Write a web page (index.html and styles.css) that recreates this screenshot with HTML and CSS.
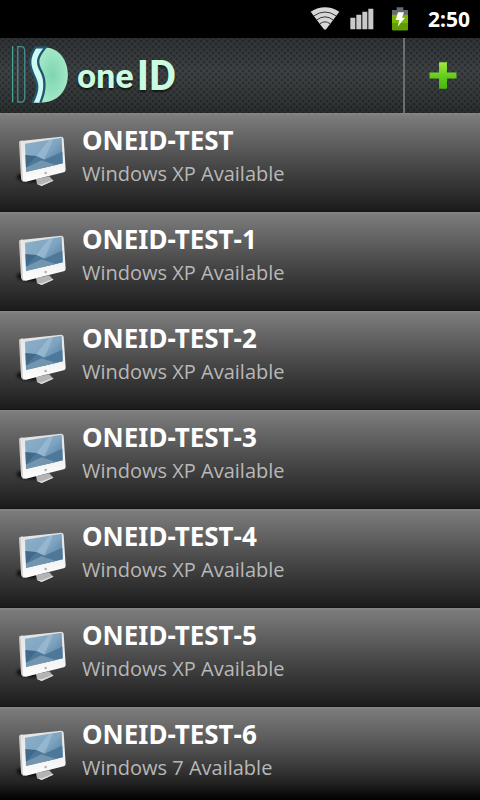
FILE: index.html
```html
<!DOCTYPE html>
<html lang="en">
<head>
<meta charset="utf-8">
<meta name="viewport" content="width=device-width, initial-scale=1">
<title>oneID</title>
<link rel="stylesheet" href="styles.css">
</head>
<body>
<svg class="defs" aria-hidden="true">
  <defs>
    <linearGradient id="screen" x1="0" y1="0" x2="1" y2="1">
      <stop offset="0" stop-color="#8fb0c8"/><stop offset="0.5" stop-color="#7fa5c2"/><stop offset="1" stop-color="#3f6a90"/>
    </linearGradient>
    <linearGradient id="case" x1="0" y1="0" x2="0" y2="1">
      <stop offset="0" stop-color="#e2e2e2"/><stop offset="1" stop-color="#fdfdfd"/>
    </linearGradient>
    <filter id="soft" x="-30%" y="-60%" width="160%" height="220%"><feGaussianBlur stdDeviation="5"/></filter>
    <symbol id="monitor" viewBox="42 72 168 162">
      <ellipse cx="94" cy="202" rx="44" ry="15" fill="#000" opacity="0.75" filter="url(#soft)"/>
      <path d="M108 207l40-8 12 13-35 16-14-6z" fill="#b4b4b4"/>
      <path d="M111 222l14 6 35-16-1-3-34 14z" fill="#ddd"/>
      <path d="M57 97q0-4 5-5l6-1 4 125-5-3q-3-2-4-8z" fill="#cfccca"/>
      <path d="M62 93l121-13q7 0 8 6l6 93q0 7-6 8l-113 28q-8 2-9-6L62 95z" fill="url(#case)"/>
      <path d="M75 101l110-18 3 77-110 26z" fill="url(#screen)"/>
      <path d="M76 135l33 3 24 11-55 24z" fill="#41698a"/>
      <path d="M109 138l24 11 54-24 1 35-62 14-48-1z" fill="#4d7899"/>
      <path d="M78 173l46-22 44 14-90 21z" fill="#7395ae"/>
      <path d="M109 138l38-49 13-2-27 62z" fill="#b4cfe0" opacity="0.4"/>
      <circle cx="137" cy="189" r="4" fill="#b8b3b3"/>
    </symbol>
  </defs>
</svg>

<div class="status">
  <svg class="wifi" viewBox="0 0 90 72" role="img" aria-label="Wi-Fi">
    <path d="M2 14Q45-12 88 14L49 66q-4 5-8 0z" fill="#d6d6d6"/>
    <path d="M11 27Q45 3 79 27M20 39Q45 20 70 39M30 50Q45 39 60 50" fill="none" stroke="#333" stroke-width="3"/>
  </svg>
  <svg class="signal" viewBox="0 0 72 66" role="img" aria-label="Signal strength">
    <path d="M1 29h15v35H1zM19 20h15v44H19zM37 11h15v53H37zM55 2h15v62H55z" fill="#c9c9c9"/>
  </svg>
  <svg class="battery" viewBox="0 0 54 72" role="img" aria-label="Battery charging">
    <path d="M17 1h20v8h14v17H3V9h14z" fill="#666b70"/>
    <path d="M3 23h48v44q0 3-3 3H6q-3 0-3-3z" fill="#78b800"/>
    <path d="M3 48h48v19q0 3-3 3H6q-3 0-3-3z" fill="#5f9d00"/>
    <path d="M21 16h18l-6 16h9L20 59l5-20H14z" fill="#fff"/>
  </svg>
  <time class="clock">2:50</time>
</div>

<header class="bar">
  <svg class="mark" viewBox="30 24 180 184" aria-hidden="true">
    <defs>
      <radialGradient id="disc"><stop offset="0" stop-color="#7ed5ae"/><stop offset="1" stop-color="#a3e8c8"/></radialGradient>
    </defs>
    <path d="M38 31v169" stroke="#4aa99c" stroke-width="5"/>
    <path d="M40 31v169" stroke="#163f4a" stroke-width="2"/>
    <path d="M53 32h10q11 0 11 15v135q0 17-11 17H53z" fill="none" stroke="#438f91" stroke-width="4"/>
    <path d="M131 35C175 33 204 72 204 116C204 164 174 202 118 201C140 160 133 130 118 104C105 78 112 60 131 35z" fill="url(#disc)"/>
    <path d="M106 34h29C108 66 108 80 120 103C134 128 137 160 119 201H97C119 160 113 141 100 115C86 84 87 64 106 34z" fill="#cdf9f3"/>
    <path d="M97 201C119 160 113 141 100 115C86 84 87 64 106 34h31C110 66 110 80 122 103C136 128 139 160 121 201" fill="none" stroke="#23566d" stroke-width="7"/>
  </svg>
  <h1 class="brand"><span class="one">one</span><span class="id">ID</span></h1>
  <button class="add" type="button" aria-label="Add">
    <svg viewBox="0 0 84 82" aria-hidden="true">
      <defs><linearGradient id="plus" x1="0" y1="0" x2="0" y2="1"><stop offset="0" stop-color="#a3e83f"/><stop offset="0.55" stop-color="#62cc1b"/><stop offset="1" stop-color="#48b90d"/></linearGradient></defs>
      <path d="M30 1h24v31h29v18H54v31H30V50H1V32h29z" fill="url(#plus)"/>
    </svg>
  </button>
</header>

<main>
  <ul class="list">
    <li><a class="row" href="#"><svg class="pc" aria-hidden="true"><use href="#monitor"/></svg><span class="text"><span class="name">ONEID-TEST</span><span class="info">Windows XP Available</span></span></a></li>
    <li><a class="row" href="#"><svg class="pc" aria-hidden="true"><use href="#monitor"/></svg><span class="text"><span class="name">ONEID-TEST<span class="num">-1</span></span><span class="info">Windows XP Available</span></span></a></li>
    <li><a class="row" href="#"><svg class="pc" aria-hidden="true"><use href="#monitor"/></svg><span class="text"><span class="name">ONEID-TEST<span class="num">-2</span></span><span class="info">Windows XP Available</span></span></a></li>
    <li><a class="row" href="#"><svg class="pc" aria-hidden="true"><use href="#monitor"/></svg><span class="text"><span class="name">ONEID-TEST<span class="num">-3</span></span><span class="info">Windows XP Available</span></span></a></li>
    <li><a class="row" href="#"><svg class="pc" aria-hidden="true"><use href="#monitor"/></svg><span class="text"><span class="name">ONEID-TEST<span class="num">-4</span></span><span class="info">Windows XP Available</span></span></a></li>
    <li><a class="row" href="#"><svg class="pc" aria-hidden="true"><use href="#monitor"/></svg><span class="text"><span class="name">ONEID-TEST<span class="num">-5</span></span><span class="info">Windows XP Available</span></span></a></li>
    <li><a class="row last" href="#"><svg class="pc" aria-hidden="true"><use href="#monitor"/></svg><span class="text"><span class="name">ONEID-TEST<span class="num">-6</span></span><span class="info">Windows 7 Available</span></span></a></li>
  </ul>
</main>
</body>
</html>
```
FILE: styles.css
```css
* { box-sizing: border-box; }
body {
  margin: 0;
  background: #000;
  color: #fff;
  font-family: "Noto Sans", "Open Sans", sans-serif;
}
.defs { position: absolute; width: 0; height: 0; }

.status {
  display: flex;
  align-items: center;
  justify-content: flex-end;
  height: 38px;
  padding-right: 10px;
  background: #000;
}
.wifi { width: 30px; height: 24px; margin-right: 10px; }
.signal { width: 24px; height: 22px; margin-right: 17px; }
.battery { width: 18px; height: 24px; margin-right: 19px; }
.clock { font: bold 21px/38px "Noto Sans", sans-serif; }

.bar {
  display: flex;
  align-items: stretch;
  height: 75px;
  padding-left: 10px;
  background:
    radial-gradient(circle, rgba(0, 0, 0, 0.28) 1px, transparent 2px) 0 0 / 6px 6px,
    radial-gradient(circle, rgba(0, 0, 0, 0.28) 1px, transparent 2px) 3px 3px / 6px 6px,
    linear-gradient(#303437, #404446 45%, #343839 80%, #29302d);
}
.mark { width: 60px; height: 61px; margin-top: 6px; }
.brand {
  display: flex;
  flex: 1;
  align-items: center;
  gap: 3px;
  margin: 0 0 0 7px;
  color: #c9fbe1;
  font-weight: bold;
  line-height: 74px;
  text-shadow: 0 2px 2px rgba(0, 0, 0, 0.6);
}
.one { font-family: Roboto, sans-serif; font-size: 34px; }
.id { font-family: Roboto, sans-serif; font-size: 42px; }
.add {
  display: flex;
  align-items: center;
  justify-content: center;
  width: 77px;
  padding: 0;
  border: 0;
  border-left: 2px solid #6c6e6f;
  background: none;
}
.add svg { width: 28px; height: 27px; }

.list { margin: 0; padding: 0; list-style: none; }
.row {
  display: flex;
  gap: 12px;
  height: 99px;
  padding: 0 14px;
  border-bottom: 1px solid #151515;
  background: linear-gradient(#878787, #7b7b7b 3%, #4b4b4b 50%, #1b1b1b);
  color: inherit;
  text-decoration: none;
}
.last {
  height: 93px;
  border: 0;
  background: linear-gradient(#878787, #7b7b7b 3%, #4b4b4b 50%, #222 82%, #000);
}
.pc { flex: none; width: 56px; height: 54px; margin-top: 21px; }
.text { display: flex; flex-direction: column; padding-top: 9px; }
.name { font-size: 26px; font-weight: bold; line-height: 36px; }
.num { font-family: "Open Sans", sans-serif; }
.info { color: #b8b8b8; font-family: "Open Sans", "Noto Sans", sans-serif; font-size: 20px; line-height: 32px; }
```
